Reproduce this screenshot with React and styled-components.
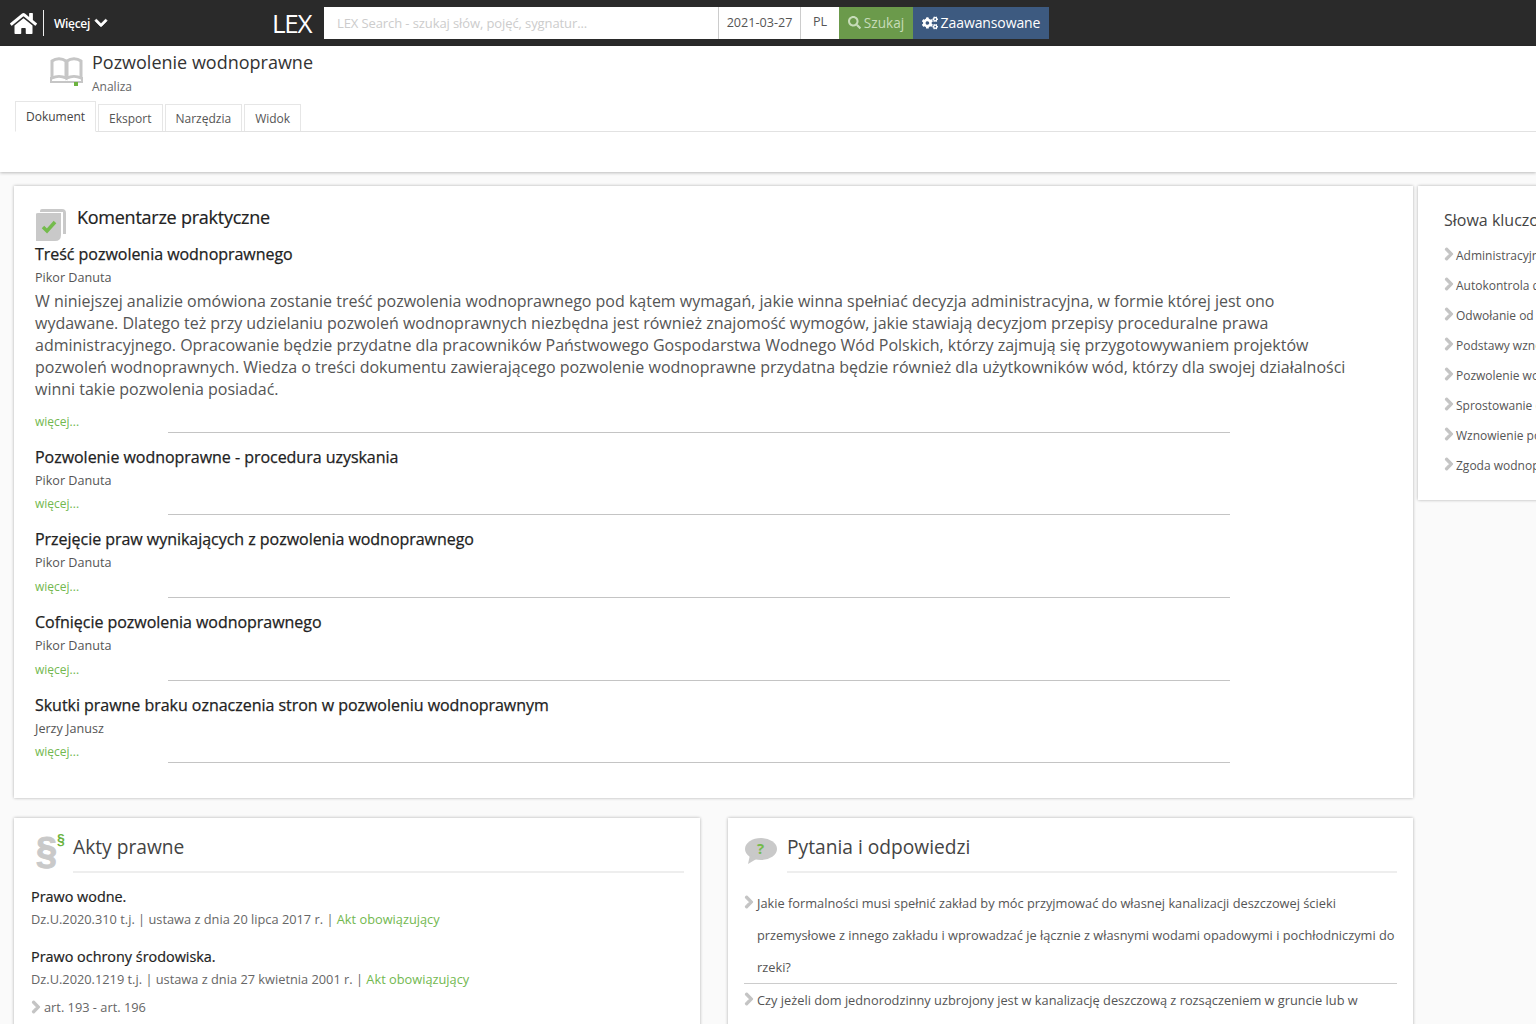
import React from 'react'
import styled, { createGlobalStyle } from 'styled-components'
import { FaHome, FaChevronDown, FaChevronRight, FaSearch, FaCogs } from 'react-icons/fa'

const GlobalStyle = createGlobalStyle`
    html, body {
        margin: 0;
        height: 1024px;
        overflow: hidden;
        background: #fafafa;
        font-family: "Open Sans", "Liberation Sans", sans-serif;
        color: #333;
    }
    * { box-sizing: border-box; }
`

const comments = [
    { title: 'Treść pozwolenia wodnoprawnego', author: 'Pikor Danuta', text: 'W niniejszej analizie omówiona zostanie treść pozwolenia wodnoprawnego pod kątem wymagań, jakie winna spełniać decyzja administracyjna, w formie której jest ono wydawane. Dlatego też przy udzielaniu pozwoleń wodnoprawnych niezbędna jest również znajomość wymogów, jakie stawiają decyzjom przepisy proceduralne prawa administracyjnego. Opracowanie będzie przydatne dla pracowników Państwowego Gospodarstwa Wodnego Wód Polskich, którzy zajmują się przygotowywaniem projektów pozwoleń wodnoprawnych. Wiedza o treści dokumentu zawierającego pozwolenie wodnoprawne przydatna będzie również dla użytkowników wód, którzy dla swojej działalności winni takie pozwolenia posiadać.' },
    { title: 'Pozwolenie wodnoprawne - procedura uzyskania', author: 'Pikor Danuta' },
    { title: 'Przejęcie praw wynikających z pozwolenia wodnoprawnego', author: 'Pikor Danuta' },
    { title: 'Cofnięcie pozwolenia wodnoprawnego', author: 'Pikor Danuta' },
    { title: 'Skutki prawne braku oznaczenia stron w pozwoleniu wodnoprawnym', author: 'Jerzy Janusz' },
]

const keywords = ['Administracyjna', 'Autokontrola decyzji', 'Odwołanie od decyzji', 'Podstawy wznowienia', 'Pozwolenie wodnoprawne', 'Sprostowanie decyzji', 'Wznowienie postępowania', 'Zgoda wodnoprawna']

const BookIcon = () => (
    <svg width="33" height="29" viewBox="0 0 33 29">
        <path d="M2 4 C6 1 12 1 16 4 V21 C12 19 6 19 2 21 Z M17 4 C21 1 27 1 31 4 V21 C27 19 21 19 17 21 Z" fill="none" stroke="#c6c6c6" strokeWidth="3" />
        <path d="M1 20 V25 H32 V20" fill="none" stroke="#c6c6c6" strokeWidth="2" />
        <rect x="24" y="25" width="4" height="4" fill="#6cb33f" />
    </svg>
)

const CheckIcon = () => (
    <svg width="32" height="34" viewBox="0 0 32 34">
        <path d="M5 3 Q5 1 7 1 H27 Q31 1 31 5 V26 H28 V4 H5 Z" fill="#c9c9c9" />
        <path d="M1 6 Q1 5 3 5 H26 V27 Q26 33 20 33 H1 Z" fill="#c9c9c9" />
        <path d="M8 19 L12 23 L20 14" fill="none" stroke="#74bb4c" strokeWidth="3.5" />
    </svg>
)

const BubbleIcon = () => (
    <svg width="32" height="26" viewBox="0 0 32 26">
        <ellipse cx="16" cy="11" rx="16" ry="11" fill="#c9c9c9" />
        <path d="M5 17 L3 26 L13 20 Z" fill="#c9c9c9" />
    </svg>
)

const App = () => (
    <Page>
        <GlobalStyle />
        <TopBar>
            <HomeLink><FaHome size={27} /></HomeLink>
            <MoreMenu>Więcej <FaChevronDown size={14} /></MoreMenu>
            <Logo>LEX</Logo>
            <SearchInput>LEX Search - szukaj słów, pojęć, sygnatur...</SearchInput>
            <DateField>2021-03-27</DateField>
            <LangField>PL</LangField>
            <SearchButton><FaSearch size={13} /> Szukaj</SearchButton>
            <AdvancedButton><FaCogs size={16} /> Zaawansowane</AdvancedButton>
        </TopBar>
        <SubHeader>
            <TitleRow>
                <BookIcon />
                <div>
                    <DocTitle>Pozwolenie wodnoprawne</DocTitle>
                    <DocType>Analiza</DocType>
                </div>
            </TitleRow>
            <Tabs>
                <Tab $active>Dokument</Tab>
                <Tab>Eksport</Tab>
                <Tab>Narzędzia</Tab>
                <Tab>Widok</Tab>
            </Tabs>
        </SubHeader>
        <Content>
            <MainColumn>
                <CommentsCard>
                    <CommentsHead>
                        <CheckIcon />
                        <CommentsTitle>Komentarze praktyczne</CommentsTitle>
                    </CommentsHead>
                    {comments.map(c => (
                        <Comment key={c.title}>
                            <CommentTitle>{c.title}</CommentTitle>
                            <Author>{c.author}</Author>
                            {c.text ? <Summary>{c.text}</Summary> : null}
                            <MoreRow>
                                <MoreLink>więcej...</MoreLink>
                                <MoreRule />
                            </MoreRow>
                        </Comment>
                    ))}
                </CommentsCard>
                <BottomRow>
                    <Card>
                        <CardHead>
                            <ParagraphIcon>§<small>§</small></ParagraphIcon>
                            <CardTitle>Akty prawne</CardTitle>
                        </CardHead>
                        <ActList>
                            <Act>
                                <ActName>Prawo wodne.</ActName>
                                <ActMeta>Dz.U.2020.310 t.j. | ustawa z dnia 20 lipca 2017 r. | <GreenText>Akt obowiązujący</GreenText></ActMeta>
                            </Act>
                            <Act>
                                <ActName>Prawo ochrony środowiska.</ActName>
                                <ActMeta>Dz.U.2020.1219 t.j. | ustawa z dnia 27 kwietnia 2001 r. | <GreenText>Akt obowiązujący</GreenText></ActMeta>
                            </Act>
                            <ArticleLink><FaChevronRight size={14} /> art. 193 - art. 196</ArticleLink>
                        </ActList>
                    </Card>
                    <Card>
                        <CardHead>
                            <BubbleWrap><BubbleIcon /><BubbleMark>?</BubbleMark></BubbleWrap>
                            <CardTitle>Pytania i odpowiedzi</CardTitle>
                        </CardHead>
                        <Questions>
                            <Question>
                                <FaChevronRight size={14} />
                                <span>Jakie formalności musi spełnić zakład by móc przyjmować do własnej kanalizacji deszczowej ścieki przemysłowe z innego zakładu i wprowadzać je łącznie z własnymi wodami opadowymi i pochłodniczymi do rzeki?</span>
                            </Question>
                            <Question>
                                <FaChevronRight size={14} />
                                <span>Czy jeżeli dom jednorodzinny uzbrojony jest w kanalizację deszczową z rozsączeniem w gruncie lub w</span>
                            </Question>
                        </Questions>
                    </Card>
                </BottomRow>
            </MainColumn>
            <KeywordsCard>
                <KeywordsTitle>Słowa kluczowe</KeywordsTitle>
                {keywords.map(k => (
                    <Keyword key={k}><FaChevronRight size={14} /> {k}</Keyword>
                ))}
            </KeywordsCard>
        </Content>
    </Page>
)

const Page = styled.div`
    width: 1536px;
    height: 1024px;
    overflow: hidden;
`

const TopBar = styled.header`
    height: 46px;
    background: #2a2a2a;
    display: flex;
    align-items: center;
    color: #fff;
    padding-left: 8px;
`

const HomeLink = styled.div`
    width: 36px;
    height: 26px;
    padding-left: 2px;
    display: flex;
    align-items: center;
    border-right: 1px solid #eee;
`

const MoreMenu = styled.div`
    width: 228px;
    padding-left: 10px;
    font-size: 12px;
    font-weight: 600;
    display: flex;
    align-items: center;
    gap: 4px;
    letter-spacing: -0.3px;

    svg {
        stroke-width: 30;
    }
`

const Logo = styled.div`
    width: 52px;
    font-size: 26px;
    letter-spacing: -1.2px;
`

const SearchInput = styled.div`
    width: 394px;
    height: 32px;
    background: #fff;
    color: #ccc;
    font-size: 13px;
    line-height: 32px;
    padding-left: 13px;
    letter-spacing: -0.1px;
`

const DateField = styled.div`
    width: 83px;
    height: 32px;
    background: #fff;
    color: #555;
    font-size: 12.6px;
    line-height: 32px;
    text-align: center;
    border-left: 1px solid #ccc;
    border-right: 1px solid #ccc;
`

const LangField = styled.div`
    width: 38px;
    height: 32px;
    background: #fff;
    color: #555;
    font-size: 12.6px;
    line-height: 30px;
    text-align: center;
`

const SearchButton = styled.div`
    width: 74px;
    height: 32px;
    padding-bottom: 1px;
    background: #6b9a4b;
    color: #c7dcb9;
    font-size: 13.6px;
    display: flex;
    align-items: center;
    justify-content: center;
    gap: 3px;
`

const AdvancedButton = styled.div`
    width: 136px;
    height: 32px;
    padding-bottom: 1px;
    background: #3d5a80;
    color: #fff;
    font-size: 14px;
    letter-spacing: -0.1px;
    display: flex;
    align-items: center;
    justify-content: center;
    gap: 3px;
`

const SubHeader = styled.div`
    height: 126px;
    background: #fff;
    box-shadow: 0 1px 3px rgba(0, 0, 0, 0.25);
    padding: 4px 0 0 15px;
`

const TitleRow = styled.div`
    display: flex;
    padding-left: 35px;
    height: 51px;
    gap: 9px;

    svg {
        margin-top: 7px;
    }
`

const DocTitle = styled.div`
    font-size: 18px;
    line-height: 24px;
    color: #333;
`

const DocType = styled.div`
    font-size: 12px;
    color: #666;
    line-height: 25px;
`

const Tabs = styled.div`
    display: flex;
    align-items: flex-end;
    border-bottom: 1px solid #e2e2e2;
    height: 31px;
    gap: 1px;
`

const Tab = styled.div`
    height: ${p => (p.$active ? '31px' : '27px')};
    line-height: ${p => (p.$active ? '29px' : '27px')};
    padding: 0 10px;
    font-size: 12px;
    color: ${p => (p.$active ? '#444' : '#555')};
    border: 1px solid #e6e6e6;
    border-bottom: ${p => (p.$active ? '1px solid #fff' : 'none')};
    margin-bottom: ${p => (p.$active ? '-1px' : '0')};
    background: #fff;
    margin-right: 1px;
`

const Content = styled.div`
    display: flex;
    gap: 5px;
    padding: 14px 0 0 14px;
`

const MainColumn = styled.div`
    width: 1399px;
    flex-shrink: 0;
    display: flex;
    flex-direction: column;
    gap: 20px;
`

const Card = styled.section`
    background: #fff;
    box-shadow: 0 0 3px rgba(0, 0, 0, 0.3);
`

const CommentsCard = styled(Card)`
    height: 612px;
    padding: 19px 21px 0;
`

const CommentsHead = styled.div`
    display: flex;
    gap: 10px;
    height: 34px;
    margin-bottom: 3px;
    svg {
        margin-top: 3px;
    }
`

const CommentsTitle = styled.h2`
    margin: 0;
    font-size: 18px;
    font-weight: 400;
    line-height: 24px;
    color: #222;
    letter-spacing: -0.25px;
    -webkit-text-stroke: 0.2px #222;
`

const Comment = styled.article`
    width: 1195px;
    margin-bottom: 13px;
`

const CommentTitle = styled.h3`
    margin: 0;
    font-size: 16px;
    font-weight: 400;
    line-height: 24px;
    color: #222;
    letter-spacing: -0.03px;
    -webkit-text-stroke: 0.25px #222;
`

const Author = styled.div`
    font-size: 12.6px;
    line-height: 23px;
    color: #555;
`

const Summary = styled.p`
    margin: 0.5px 0 12.4px;
    width: 1320px;
    font-size: 16px;
    line-height: 22px;
    color: #555;
    letter-spacing: -0.01px;
`

const MoreRow = styled.div`
    display: flex;
    align-items: flex-end;
    height: 20px;
    margin-top: 2.6px;
`

const MoreLink = styled.div`
    width: 133px;
    font-size: 12px;
    line-height: 20px;
    color: #72b84f;
`

const MoreRule = styled.div`
    flex: 1;
    border-bottom: 1px solid #c4c4c4;
    margin-bottom: -1px;
`

const BottomRow = styled.div`
    display: grid;
    grid-template-columns: 686px 685px;
    gap: 28px;
    min-height: 300px;
`

const CardHead = styled.div`
    display: flex;
    align-items: flex-start;
    height: 55px;
    position: relative;
    margin: 0 16px 0 16px;
`

const CardTitle = styled.h2`
    margin: 0;
    flex: 1;
    height: 55px;
    font-size: 19.2px;
    font-weight: 400;
    line-height: 58px;
    color: #444;
    border-bottom: 2px solid #eee;
`

const ParagraphIcon = styled.div`
    width: 43px;
    padding-left: 6px;
    font-family: "Liberation Sans", sans-serif;
    font-weight: 700;
    font-size: 38px;
    line-height: 66px;
    color: #c9c9c9;
    -webkit-text-stroke: 1px #c9c9c9;
    position: relative;

    small {
        position: absolute;
        left: 27px;
        top: -12px;
        font-size: 14px;
        color: #6cb33f;
        -webkit-text-stroke: 0;
    }
`

const BubbleWrap = styled.div`
    width: 43px;
    padding: 20px 0 0 1px;
    position: relative;
`

const BubbleMark = styled.span`
    position: absolute;
    left: 13px;
    top: 20px;
    font-size: 15px;
    line-height: 20px;
    font-weight: 700;
    color: #74bb4c;
`

const ActList = styled.div`
    padding: 12px 17px 0;
`

const Act = styled.div`
    margin-bottom: 15px;
`

const ActName = styled.div`
    font-size: 14.4px;
    line-height: 24px;
    color: #222;
    -webkit-text-stroke: 0.2px #222;
`

const ActMeta = styled.div`
    font-size: 12.8px;
    line-height: 21px;
    color: #666;
`

const GreenText = styled.span`
    color: #72b84f;
`

const ArticleLink = styled.div`
    display: flex;
    align-items: center;
    gap: 1px;
    font-size: 12.8px;
    color: #666;
    line-height: 18px;
    margin-top: -7px;

    svg {
        color: #c4c4c4;
        margin-left: -2px;
        stroke-width: 40;
    }
`

const Questions = styled.div`
    padding: 14px 16px 0 16px;
`

const Question = styled.div`
    display: flex;
    gap: 1px;
    font-size: 12.8px;
    line-height: 32px;
    color: #555;
    border-bottom: 1px solid #ccc;

    &:last-child {
        border-bottom: none;
    }

    svg {
        flex-shrink: 0;
        color: #c4c4c4;
        margin: 8px 0 0 -2px;
        stroke-width: 40;
    }
`

const KeywordsCard = styled(Card)`
    width: 200px;
    height: 314px;
    flex-shrink: 0;
    padding: 22px 0 0 26px;
    white-space: nowrap;
`

const KeywordsTitle = styled.div`
    font-size: 16px;
    line-height: 24px;
    color: #444;
    margin-bottom: 8px;
`

const Keyword = styled.div`
    height: 30px;
    display: flex;
    align-items: center;
    gap: 0;
    font-size: 12px;
    color: #555;

    svg {
        color: #c4c4c4;
        flex-shrink: 0;
        margin: -2px 0 0 -2px;
        stroke-width: 40;
    }
`

export default App
